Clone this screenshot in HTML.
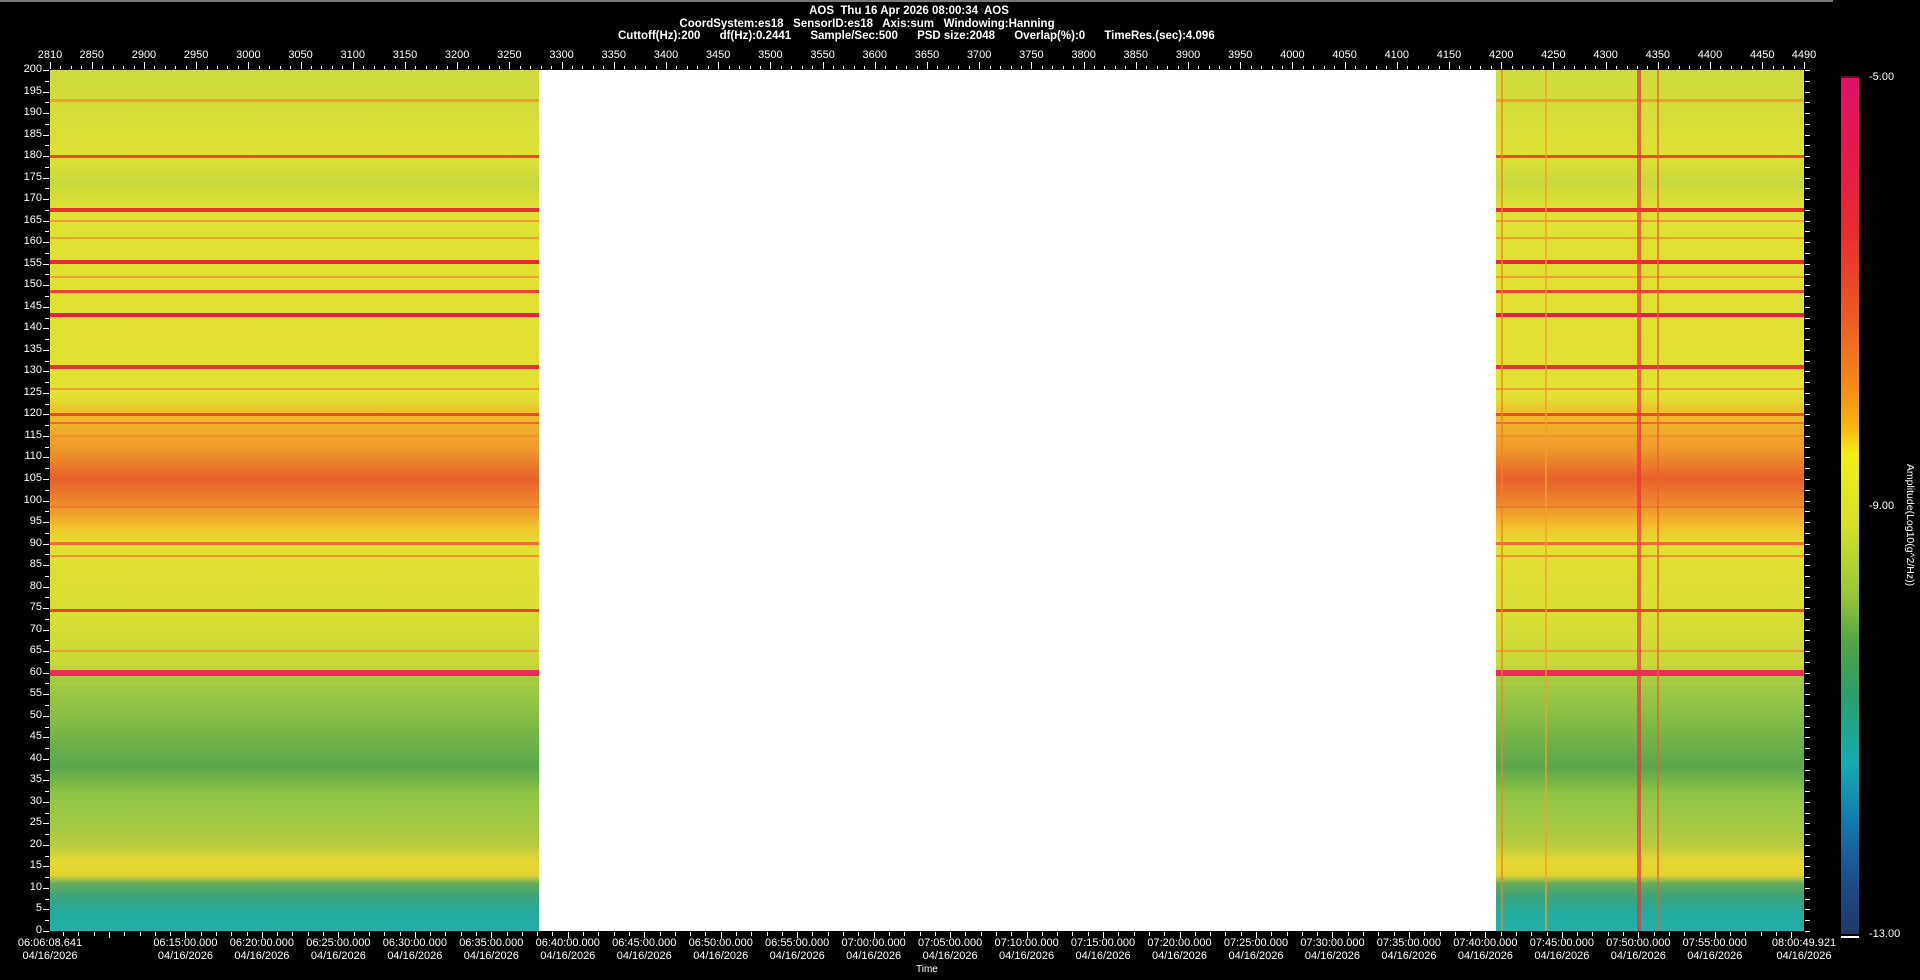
<!DOCTYPE html>
<html><head><meta charset="utf-8"><style>
html,body{margin:0;padding:0;background:#000;width:1920px;height:980px;overflow:hidden;font-family:"Liberation Sans Narrow","Liberation Sans",sans-serif;color:#fff}
.t{position:absolute;white-space:nowrap;font-size:11px}
.hd{font-weight:bold;font-size:11.5px}
#data{position:absolute;left:50px;top:70px;width:1754px;height:861px;
background:linear-gradient(to bottom,#cddb3e 0%,#d6de38 6%,#dde232 10%,#c8d83c 13%,#dde232 16%,#e0e030 25%,#e2e030 38%,#eebc2a 40%,#ee9a2a 44%,#e8602a 47.5%,#ec842a 50%,#f2c02a 53%,#e2e030 55%,#d6de34 64%,#c8d838 69%,#a8cc40 70.5%,#90c244 74%,#68ae4a 79%,#5aa64c 81%,#8ec444 84%,#a6c842 88%,#b8cc40 90%,#e6d830 92%,#e2d430 93.5%,#64ac5c 94.5%,#3aa47c 96%,#22aca0 98%,#22b0a8 100%)}
#white{position:absolute;left:539px;top:70px;width:957px;height:861px;background:#fff}
.hl{position:absolute;left:0;width:100%}
.vl{position:absolute;top:0;height:100%}
#cbar{position:absolute;left:1841px;top:77px;width:18px;height:857px;background:linear-gradient(to bottom,#e0106a 0%,#e61a48 10%,#e82c30 18%,#ec5a24 28%,#f48a18 36%,#f8b810 41%,#f4ee18 44%,#d6e028 52%,#9cc838 60%,#52a444 66%,#2c9e6a 72%,#14acb0 80%,#1478b0 87%,#1c5090 93%,#203868 100%)}
</style></head><body>
<div style="position:absolute;left:0;top:0;width:1833px;height:2px;background:#777"></div>
<div class="t hd" style="left:0;width:1818px;text-align:center;top:5px">AOS&nbsp; Thu 16 Apr 2026 08:00:34&nbsp; AOS</div>
<div class="t hd" style="left:0;width:1734px;text-align:center;top:18px">CoordSystem:es18&nbsp;&nbsp; SensorID:es18&nbsp;&nbsp; Axis:sum&nbsp;&nbsp; Windowing:Hanning</div>
<div class="t hd" style="left:618px;top:30px;word-spacing:0">Cuttoff(Hz):200&nbsp;&nbsp;&nbsp;&nbsp;&nbsp; df(Hz):0.2441&nbsp;&nbsp;&nbsp;&nbsp;&nbsp; Sample/Sec:500&nbsp;&nbsp;&nbsp;&nbsp;&nbsp; PSD size:2048&nbsp;&nbsp;&nbsp;&nbsp;&nbsp; Overlap(%):0&nbsp;&nbsp;&nbsp;&nbsp;&nbsp; TimeRes.(sec):4.096</div>
<div id="data"></div>
<div id="white"></div>
<div id="cbar"></div>
<div style="position:absolute;left:1841px;top:76px;width:18px;height:2px;background:#501020"></div>
<div style="position:absolute;left:1841px;top:936px;width:18px;height:2px;background:#fff"></div>
<div class="t" style="left:1869px;top:71px">-5.00</div>
<div class="t" style="left:1869px;top:500px">-9.00</div>
<div class="t" style="left:1869px;top:928px">-13.00</div>
<div class="t" style="left:1910px;top:525px;transform:translate(-50%,-50%) rotate(90deg);font-size:10.5px">Amplitude(Log10(g^2/Hz))</div>
<div class="t" style="left:916px;top:964px;font-size:10px">Time</div>
<div id="ax"></div>
<script>
var d=document.getElementById('data'),h='';
var L=[[193,'#f0a030',3],[180,'#ec4a30',3],[167.5,'#e83030',4],[165,'#f09a30',2],[161,'#f0a030',2],[155.5,'#e82838',4],[152,'#f0a030',2],[148.5,'#ec4030',3],[143,'#e8203c',4],[131,'#e83030',4],[126,'#f0a030',2],[120,'#ec4a30',3],[118,'#ee6a30',2],[115,'#f09030',2],[98.5,'#f07a30',2],[90,'#f07030',3],[87,'#f09030',2],[74.5,'#ec4030',3],[65,'#f0a030',2],[60,'#ee2a5a',6],[57.5,'#f0b030',1]];
L.forEach(function(l){h+='<div class="hl" style="top:'+((200-l[0])*4.305-l[2]/2)+'px;height:'+l[2]+'px;background:'+l[1]+'"></div>'});
[[1501,'#f08030',2],[1545,'#f0a030',2],[1637,'#ee3040',4],[1657,'#f06030',2]].forEach(function(v){h+='<div class="vl" style="left:'+(v[0]-50)+'px;width:'+v[2]+'px;background:'+v[1]+';opacity:.7"></div>'});
d.innerHTML=h;
var a='';
for(var v=2810;v<=4490;v+=10){var x=50+(v-2810)/1680*1754;var maj=(v%50==0)||v==2810||v==4490;
a+='<div style="position:absolute;left:'+Math.round(x)+'px;top:'+(maj?62:66)+'px;width:1px;height:'+(maj?7:3)+'px;background:#fff"></div>';}
var lab=[2810];for(v=2850;v<=4450;v+=50)lab.push(v);lab.push(4490);
lab.forEach(function(v){var x=50+(v-2810)/1680*1754;a+='<div class="t" style="left:'+(x-20)+'px;width:40px;text-align:center;top:49px">'+v+'</div>'});
for(var f=0;f<=200;f+=2.5){var y=70+(200-f)*4.305;var maj=f%5==0;
a+='<div style="position:absolute;left:'+(maj?43:45)+'px;top:'+Math.round(y)+'px;width:'+(maj?6:4)+'px;height:1px;background:#fff"></div>';
a+='<div style="position:absolute;left:1805px;top:'+Math.round(y)+'px;width:5px;height:1px;background:#fff"></div>';
if(maj)a+='<div class="t" style="left:0;width:42px;text-align:right;top:'+(y-7)+'px">'+f+'</div>';}
var t0=6*3600+6*60+8.641,T=(8*3600+49.921)-t0;
for(var s=6*3600+7*60;s<t0+T;s+=60){var x=50+(s-t0)/T*1754;var maj=s%300==0;
a+='<div style="position:absolute;left:'+Math.round(x)+'px;top:932px;width:1px;height:'+(maj?6:4)+'px;background:#fff"></div>';}
function tl(x,t1s){a+='<div class="t" style="left:'+(x-40)+'px;width:80px;text-align:center;top:937px;line-height:13px">'+t1s+'<br>04/16/2026</div>';}
tl(50,'06:06:08.641');
for(var s=6*3600+15*60;s<=7*3600+55*60;s+=300){var x=50+(s-t0)/T*1754;var hh=Math.floor(s/3600),mm=Math.floor(s%3600/60);
tl(x,'0'+hh+':'+(mm<10?'0':'')+mm+':00.000');}
tl(1804,'08:00:49.921');
document.getElementById('ax').innerHTML=a;
</script>
</body></html>
